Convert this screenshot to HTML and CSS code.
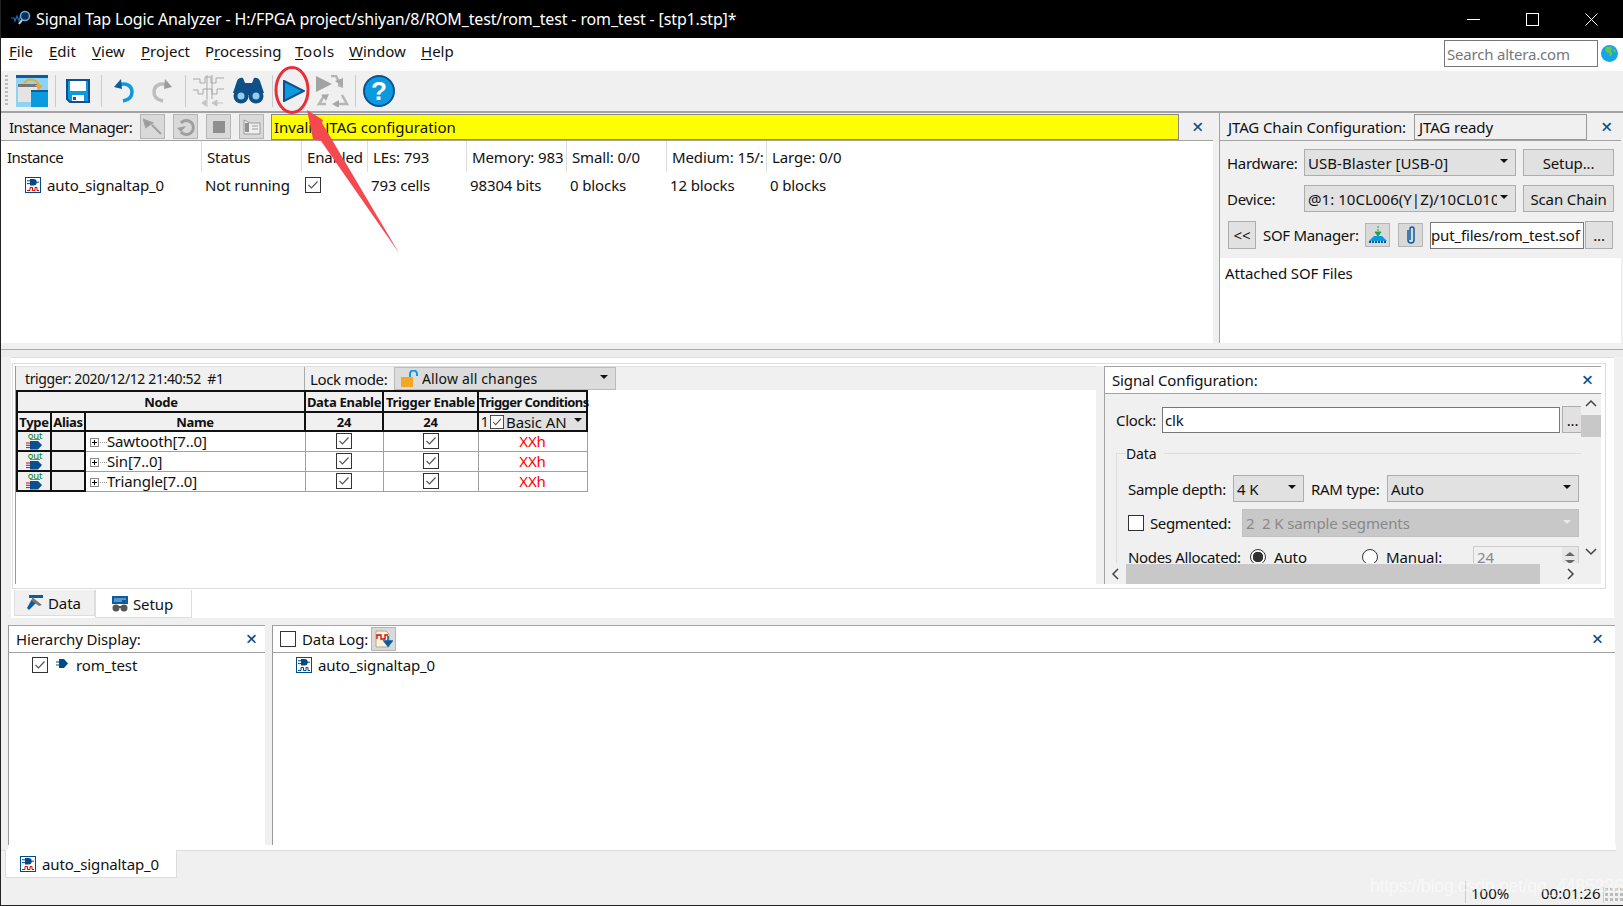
FILE: index.html
```html
<!DOCTYPE html>
<html lang="en">
<head>
<meta charset="utf-8">
<title>Signal Tap Logic Analyzer</title>
<link rel="stylesheet" href="styles.css">
</head>
<body>
<svg class="defs" width="0" height="0">
  <symbol id="inst-red" viewBox="0 0 16 16">
    <rect x=".5" y=".5" width="15" height="15" fill="#fff" stroke="#004a86"/>
    <path d="M5 2h3.500a3.200 3.200 0 0 1 0 6.400H5z" fill="#004a86"/><path d="M2 3.800h3M2 6.600h3M11 5.200h3" stroke="#004a86"/>
    <path d="M2 13.500h3v-3h2.500v3h2.500v-3h2v3h2" fill="none" stroke="#e00000"/>
  </symbol>
  <symbol id="inst-blue" viewBox="0 0 16 16">
    <rect x=".5" y=".5" width="15" height="15" fill="#fff" stroke="#004a86"/>
    <path d="M5 2h3.500a3.200 3.200 0 0 1 0 6.400H5z" fill="#004a86"/><path d="M2 3.800h3M2 6.600h3M11 5.200h3" stroke="#004a86"/>
    <path d="M2 13.500h3v-3h2.500v3h2.500v-3h2v3h2" fill="none" stroke="#004a86"/>
  </symbol>
  <symbol id="out" viewBox="0 0 18 18">
    <text x="10" y="6.500" text-anchor="middle" class="out-text">out</text>
    <path d="M5 7.500h10" stroke="#0a7d2a" stroke-width=".7"/>
    <path d="M5 9h8l4 4-4 4.500H5z" fill="#0a4f94"/>
    <path d="M1 11h4M1 13.300h4M1 15.600h4" stroke="#e00000"/>
  </symbol>
  <symbol id="check" viewBox="0 0 16 16">
    <rect x=".5" y=".5" width="15" height="15" fill="#fff" stroke="#333"/>
    <path d="M3.500 8l3 3 6-6.500" fill="none" stroke="#555" stroke-width="1.200"/>
  </symbol>
  <symbol id="plus" viewBox="0 0 9 9">
    <rect x=".5" y=".5" width="8" height="8" fill="#fff" stroke="#888"/><path d="M2 4.500h5M4.500 2v5" stroke="#000"/>
  </symbol>
</svg>

<div class="app">
  <header class="titlebar">
    <svg class="title-logo" width="22" height="18" viewBox="0 0 22 18"><path d="M0 8h3l1 3 2-5 2 5 1-4" fill="none" stroke="#1c6fb0" stroke-width="1.200"/><circle cx="14" cy="6" r="4.500" fill="#0d2d55" stroke="#5fb4e6" stroke-width="1.500"/><path d="M11 10l-3 4" stroke="#bcd6ea" stroke-width="2"/></svg>
    <span class="title-text">Signal Tap Logic Analyzer - H:/FPGA project/shiyan/8/ROM_test/rom_test - rom_test - [stp1.stp]*</span>
    <div class="win-controls">
      <svg width="13" height="13" viewBox="0 0 13 13"><path d="M0 6.500h13" stroke="#fff"/></svg>
      <svg width="13" height="13" viewBox="0 0 13 13"><rect x=".5" y=".5" width="12" height="12" fill="none" stroke="#fff"/></svg>
      <svg width="13" height="13" viewBox="0 0 13 13"><path d="M.5.500l12 12M12.500.500l-12 12" stroke="#fff"/></svg>
    </div>
  </header>

  <nav class="menubar">
    <span class="menu-item m-file"><u>F</u>ile</span>
    <span class="menu-item m-edit"><u>E</u>dit</span>
    <span class="menu-item m-view"><u>V</u>iew</span>
    <span class="menu-item m-project"><u>P</u>roject</span>
    <span class="menu-item m-processing">P<u>r</u>ocessing</span>
    <span class="menu-item m-tools"><u>T</u>ools</span>
    <span class="menu-item m-window"><u>W</u>indow</span>
    <span class="menu-item m-help"><u>H</u>elp</span>
    <div class="search">Search altera.com</div>
    <svg class="globe" width="17" height="17" viewBox="0 0 17 17"><circle cx="8.500" cy="8.500" r="8.500" fill="#10a5ec"/><path d="M5 2l5-.5 1.500 2.500-2 2 2 2-1.500 3.500-1.500-.5-.5-3-3-1-1-3zM12.500 3l2.500 3-1 2-1.500-2z" fill="#6cc644"/></svg>
  </nav>

  <div class="toolbar">
    <span class="grip"></span>
    <svg class="t-win" width="32" height="32" viewBox="0 0 32 32"><rect width="32" height="32" fill="#8ed3f2"/><rect width="32" height="3" fill="#0d5c9e"/><rect x="2" y="9" width="19" height="18" fill="#e4e4e4"/><rect x="2" y="9" width="19" height="3" fill="#777"/><rect x="15" y="15" width="17" height="17" fill="#0b9ade"/><rect x="15" y="15" width="17" height="2" fill="#0d5c9e"/><path d="M8 8c4-5 13-5 15 3" fill="none" stroke="#f5a623" stroke-width="2"/><path d="M19 10h8l-4 5z" fill="#f5a623"/></svg>
    <span class="t-sep s-1"></span>
    <svg class="t-save" width="24" height="24" viewBox="0 0 24 24"><path d="M1 1h22v22H4l-3-3z" fill="#0b9ade" stroke="#0d4f94" stroke-width="2"/><rect x="4" y="2" width="16" height="10" fill="#fff"/><rect x="6" y="16" width="12" height="6" fill="#fff"/><rect x="7" y="18" width="3" height="3" fill="#1a50c0"/></svg>
    <span class="t-sep s-2"></span>
    <svg class="t-undo" width="20" height="24" viewBox="0 0 20 24"><path d="M5 6c7-3 13 1 13 7 0 5-4 8-9 9" fill="none" stroke="#0b9ade" stroke-width="3.500"/><path d="M0 8l7-8 1 10z" fill="#0d5c9e"/></svg>
    <svg class="t-redo" width="20" height="24" viewBox="0 0 20 24"><path d="M15 6C8 3 2 7 2 13c0 5 4 8 9 9" fill="none" stroke="#bdbdbd" stroke-width="3.500"/><path d="M20 8l-7-8-1 10z" fill="#9c9c9c"/></svg>
    <span class="t-sep s-3"></span>
    <svg class="t-sig" width="32" height="32" viewBox="0 0 32 32"><path d="M0 4h7v4h5V2h6v6h5V3h8M0 15h5v4h5v-5h9v5h5v-5h7M14 0v24M19 0v24" fill="none" stroke="#a8a8a8"/><path d="M9 28l4-3v6zM19 28h11M19 28l5-3v6zM14 24v8" fill="#c4c4c4" stroke="#c4c4c4"/></svg>
    <svg class="t-bino" width="31" height="28" viewBox="0 0 31 28"><path d="M4 4q2-4 6-3l2 5h7l2-5q4-1 6 3l4 12v0H0z" fill="#0d4f86"/><circle cx="8" cy="19" r="7.500" fill="#0d4f86"/><circle cx="23" cy="19" r="7.500" fill="#0d4f86"/><circle cx="8" cy="19" r="3.500" fill="#8fd0f0"/><circle cx="23" cy="19" r="3.500" fill="#8fd0f0"/><rect x="12" y="9" width="7" height="9" fill="#0d4f86"/></svg>
    <span class="t-sep s-4"></span>
    <svg class="t-play" width="22" height="22" viewBox="0 0 22 22"><path d="M1 1l20 10L1 21z" fill="#0b9ade" stroke="#0d4f94" stroke-width="2"/></svg>
    <svg class="t-auto" width="33" height="32" viewBox="0 0 33 32"><path d="M0 1l16 8L0 17z" fill="#a3a3a3"/><path d="M15 1l5 0 5 10-3-1M10 29H3l5-8-2-1M19 29h12l-5-9" fill="none" stroke="#b5b5b5" stroke-width="2.500"/><path d="M16 29l7-4v8zM6 20l7-1-3 7zM27 12l-8-6 8-3z" fill="#a8a8a8"/></svg>
    <span class="t-sep s-5"></span>
    <svg class="t-help" width="32" height="32" viewBox="0 0 32 32"><circle cx="16" cy="16" r="15" fill="#0b9ade" stroke="#0d4f94" stroke-width="2"/><text x="16" y="25" text-anchor="middle" class="help-q">?</text></svg>
  </div>

  <section class="top">
    <div class="instance">
      <div class="inst-head">
        <span class="inst-label">Instance Manager:</span>
        <span class="tool-btn"><svg width="20" height="20" viewBox="0 0 20 20"><path d="M1 3l8 3-6 4zM9 8l9 9" fill="#9a9a9a" stroke="#a0a0a0" stroke-width="2"/></svg></span>
        <span class="tool-btn"><svg width="20" height="20" viewBox="0 0 20 20"><path d="M5 6a7 7 0 1 1 0 9" fill="none" stroke="#9f9f9f" stroke-width="3"/><path d="M1 11l9-2-5 6z" fill="#9f9f9f"/></svg></span>
        <span class="tool-btn"><svg width="20" height="20" viewBox="0 0 20 20"><rect x="4" y="4" width="12" height="12" fill="#8f8f8f"/></svg></span>
        <span class="tool-btn"><svg width="20" height="20" viewBox="0 0 20 20"><path d="M2 3l6 3h10v11H2z" fill="#efefef" stroke="#9a9a9a"/><path d="M3 6h4v9H3z" fill="#8f8f8f"/><path d="M10 9h6M10 12h6" stroke="#999"/></svg></span>
        <div class="status-yellow">Invalid JTAG configuration</div>
        <span class="close inst-close">×</span>
      </div>
      <div class="inst-table">
        <div class="ih c-inst">Instance</div>
        <div class="ih c-status">Status</div>
        <div class="ih c-en">Enabled</div>
        <div class="ih c-les">LEs: 793</div>
        <div class="ih c-mem">Memory: 983</div>
        <div class="ih c-small">Small: 0/0</div>
        <div class="ih c-med">Medium: 15/:</div>
        <div class="ih c-large">Large: 0/0</div>
        <div class="ir c-inst-row"><svg class="icon16" viewBox="0 0 16 16"><use href="#inst-red"/></svg>auto_signaltap_0</div>
        <div class="ir r-status">Not running</div>
        <div class="ir r-en"><svg class="icon16" viewBox="0 0 16 16"><use href="#check"/></svg></div>
        <div class="ir r-les">793 cells</div>
        <div class="ir r-mem">98304 bits</div>
        <div class="ir r-small">0 blocks</div>
        <div class="ir r-med">12 blocks</div>
        <div class="ir r-large">0 blocks</div>
      </div>
    </div>
    <div class="jtag">
      <div class="jtag-head">
        <span class="jtag-title">JTAG Chain Configuration:</span>
        <div class="jtag-status">JTAG ready</div>
        <span class="close jtag-close">×</span>
      </div>
      <div class="jtag-body">
        <div class="jrow">
          <span class="jlabel">Hardware:</span>
          <div class="combo c-hw"><span class="combo-text">USB-Blaster [USB-0]</span><i class="caret"></i></div>
          <div class="btn b-setup">Setup...</div>
        </div>
        <div class="jrow">
          <span class="jlabel">Device:</span>
          <div class="combo c-hw"><span class="combo-text">@1: 10CL006(Y|Z)/10CL010</span><i class="caret"></i></div>
          <div class="btn b-setup">Scan Chain</div>
        </div>
        <div class="jrow jrow-sof">
          <div class="btn b-back">&lt;&lt;</div>
          <span class="sof-label">SOF Manager:</span>
          <span class="tool-btn b-sof"><svg width="20" height="18" viewBox="0 0 20 18"><path d="M10 0v2M10 3v2M7 6h6l-3 4z" stroke="#1aa548" fill="#1aa548"/><path d="M1 15l5-5h8l5 5z" fill="#0b9ade"/><path d="M1 16h18" stroke="#0d4f94" stroke-dasharray="2 1" stroke-width="2"/></svg></span>
          <span class="tool-btn b-clip"><svg width="14" height="20" viewBox="0 0 14 20"><path d="M4 5v10a3 3 0 0 0 6 0V4a2 2 0 0 0-4 0v11" fill="none" stroke="#0d5c9e" stroke-width="1.500"/></svg></span>
          <div class="sof-input"><span>put_files/rom_test.sof</span></div>
          <div class="btn b-dots">...</div>
        </div>
      </div>
      <div class="jtag-files">Attached SOF Files</div>
    </div>
  </section>
  <div class="divider"></div>

  <section class="mid">
    <div class="mid-frame">
      <div class="mid-left">
        <div class="trig-head">
          <span class="trig-info">trigger: 2020/12/12 21:40:52&nbsp; #1</span>
          <span class="lock-label">Lock mode:</span>
          <div class="combo c-lock">
            <svg class="lock-icon" width="18" height="17" viewBox="0 0 18 17"><rect x="0" y="7" width="12" height="10" fill="#f5a623"/><path d="M9 7V4a3.500 3.500 0 0 1 7 0v2" fill="none" stroke="#0b9ade" stroke-width="2"/></svg>
            <span class="combo-text">Allow all changes</span><i class="caret"></i>
          </div>
        </div>
        <table class="nodes">
          <colgroup><col class="w-type"><col class="w-alias"><col class="w-name"><col class="w-de"><col class="w-te"><col class="w-tc"></colgroup>
          <thead>
            <tr class="hr1"><th colspan="3">Node</th><th>Data Enable</th><th>Trigger Enable</th><th class="th-clip">Trigger Conditions</th></tr>
            <tr class="hr2"><th>Type</th><th>Alias</th><th>Name</th><th>24</th><th>24</th>
              <th class="th-tc"><div class="tc-wrap"><span class="tc-num">1</span><svg class="icon14" viewBox="0 0 16 16"><use href="#check"/></svg><div class="tc-combo">Basic AN<i class="caret"></i></div></div></th></tr>
          </thead>
          <tbody>
            <tr><td class="td-type"><svg class="icon-out" viewBox="0 0 18 18"><use href="#out"/></svg></td><td class="td-alias"></td><td class="td-name"><svg class="icon9" viewBox="0 0 9 9"><use href="#plus"/></svg><i class="dots"></i>Sawtooth[7..0]</td><td class="td-c"><svg class="icon15" viewBox="0 0 16 16"><use href="#check"/></svg></td><td class="td-c"><svg class="icon15" viewBox="0 0 16 16"><use href="#check"/></svg></td><td class="td-x">XXh</td></tr>
            <tr><td class="td-type"><svg class="icon-out" viewBox="0 0 18 18"><use href="#out"/></svg></td><td class="td-alias"></td><td class="td-name"><svg class="icon9" viewBox="0 0 9 9"><use href="#plus"/></svg><i class="dots"></i>Sin[7..0]</td><td class="td-c"><svg class="icon15" viewBox="0 0 16 16"><use href="#check"/></svg></td><td class="td-c"><svg class="icon15" viewBox="0 0 16 16"><use href="#check"/></svg></td><td class="td-x">XXh</td></tr>
            <tr><td class="td-type"><svg class="icon-out" viewBox="0 0 18 18"><use href="#out"/></svg></td><td class="td-alias"></td><td class="td-name"><svg class="icon9" viewBox="0 0 9 9"><use href="#plus"/></svg><i class="dots"></i>Triangle[7..0]</td><td class="td-c"><svg class="icon15" viewBox="0 0 16 16"><use href="#check"/></svg></td><td class="td-c"><svg class="icon15" viewBox="0 0 16 16"><use href="#check"/></svg></td><td class="td-x">XXh</td></tr>
          </tbody>
        </table>
      </div>
      <div class="mid-split"></div>
      <div class="signal">
        <div class="signal-title"><span>Signal Configuration:</span><span class="close sig-close">×</span></div>
        <div class="signal-main">
          <div class="signal-content">
            <div class="clock-row">
              <span class="clock-label">Clock:</span>
              <div class="clock-input">clk</div>
              <div class="btn b-clock">...</div>
            </div>
            <div class="group">
              <div class="group-title">Data</div>
              <div class="g-row g-row1">
                <span class="depth-label">Sample depth:</span>
                <div class="combo c-depth"><span class="combo-text">4 K</span><i class="caret"></i></div>
                <span class="ram-label">RAM type:</span>
                <div class="combo c-ram"><span class="combo-text">Auto</span><i class="caret"></i></div>
              </div>
              <div class="g-row g-row2">
                <span class="box"></span>
                <span class="seg-label">Segmented:</span>
                <div class="combo c-seg"><span class="combo-text">2&nbsp; 2 K sample segments</span><i class="caret caret-off"></i></div>
              </div>
              <div class="g-row g-row3">
                <span class="nodes-label">Nodes Allocated:</span>
                <span class="radio radio-on"></span><span class="auto-label">Auto</span>
                <span class="radio"></span><span class="manual-label">Manual:</span>
                <div class="spin"><span>24</span><span class="spin-btns"><i class="sp-up"></i><i class="sp-down"></i></span></div>
              </div>
            </div>
          </div>
          <div class="vscroll">
            <svg class="chev" width="12" height="8" viewBox="0 0 12 8"><path d="M1 7l5-5 5 5" fill="none" stroke="#444" stroke-width="1.500"/></svg>
            <div class="vthumb"></div>
            <svg class="chev chev-down" width="12" height="8" viewBox="0 0 12 8"><path d="M1 1l5 5 5-5" fill="none" stroke="#444" stroke-width="1.500"/></svg>
          </div>
        </div>
        <div class="hscroll">
          <svg class="chev-h" width="8" height="12" viewBox="0 0 8 12"><path d="M7 1L2 6l5 5" fill="none" stroke="#444" stroke-width="1.500"/></svg>
          <div class="hthumb"></div>
          <svg class="chev-h" width="8" height="12" viewBox="0 0 8 12"><path d="M1 1l5 5-5 5" fill="none" stroke="#444" stroke-width="1.500"/></svg>
        </div>
      </div>
    </div>
    <div class="mid-tabs">
      <div class="tab tab-data"><svg width="17" height="17" viewBox="0 0 17 17"><path d="M2 1h14v3H2z" fill="#0d5c9e"/><path d="M5 5l4 4-7 7-2-2z" fill="#0d5c9e"/><path d="M5 3l10 8-3 1-7-5z" fill="#777"/></svg>Data</div>
      <div class="tab tab-setup"><svg width="18" height="16" viewBox="0 0 18 16"><rect x="1" width="16" height="8" fill="#0d5c9e"/><path d="M3 3h12M3 5h8" stroke="#9fd4f2"/><circle cx="5" cy="12" r="3.500" fill="#555"/><circle cx="13" cy="12" r="3.500" fill="#555"/><rect x="7" y="10" width="4" height="2" fill="#555"/></svg>Setup</div>
    </div>
  </section>

  <section class="bottom">
    <div class="hier">
      <div class="pane-head hier-head"><span>Hierarchy Display:</span><span class="close hier-close">×</span></div>
      <div class="hier-row">
        <svg class="icon16" viewBox="0 0 16 16"><use href="#check"/></svg>
        <svg class="net" width="13" height="9" viewBox="0 0 13 9"><path d="M3 0h5l4 4.500-4 4.500H3z" fill="#004a86"/><path d="M0 3h3M0 6h3" stroke="#004a86"/></svg>
        <span>rom_test</span>
      </div>
    </div>
    <div class="bottom-split"></div>
    <div class="dlog">
      <div class="pane-head dlog-head">
        <span class="box"></span>
        <span class="dlog-title">Data Log:</span>
        <span class="tool-btn b-log"><svg width="18" height="18" viewBox="0 0 18 18"><path d="M1 1h10l3 3v13H1z" fill="#fbf2d8" stroke="#b5a98f"/><path d="M2 9V5h4v4h4V5h3" fill="none" stroke="#e00000" stroke-width="1.300"/><path d="M13 6v7M9 11h8l-4 5z" stroke="#0d5c9e" fill="#0d5c9e" stroke-width="1.500"/></svg></span>
        <span class="close dlog-close">×</span>
      </div>
      <div class="dlog-row"><svg class="icon16" viewBox="0 0 16 16"><use href="#inst-blue"/></svg><span>auto_signaltap_0</span></div>
    </div>
  </section>
  <div class="strip"></div>

  <div class="bottom-tabs">
    <div class="inst-tab"><svg class="icon16" viewBox="0 0 16 16"><use href="#inst-red"/></svg><span>auto_signaltap_0</span></div>
  </div>

  <footer class="statusbar">
    <span class="st-cell st-pct">100%</span>
    <span class="st-cell st-time">00:01:26</span>
    <span class="resize-grip"></span>
  </footer>

  <svg class="annot" width="1623" height="906" viewBox="0 0 1623 906">
    <ellipse cx="292" cy="90" rx="16" ry="22.500" fill="none" stroke="#e8303a" stroke-width="3"/>
    <polygon points="307,110 323,120 322,123 399,253 321,141 313,139" fill="#f4494f"/>
  </svg>
  <div class="watermark">https://blog.csdn.net/qq_44852369</div>
</div>
</body>
</html>
```

FILE: styles.css
```css
* { box-sizing: border-box; }
html, body { margin: 0; padding: 0; width: 1623px; height: 906px; overflow: hidden; }
body { font-family: "Noto Sans", "Open Sans", sans-serif; font-size: 15px; letter-spacing: -.12px; color: #111; background: #f0f0f0; }
.defs { position: absolute; }
.out-text { font: 9.500px "Noto Sans", sans-serif; fill: #0a7d2a; }
.help-q { font: bold 26px "Liberation Sans", sans-serif; fill: #fff; }

.app { position: relative; width: 1623px; height: 906px; display: flex; flex-direction: column; border-left: 1px solid #222; border-bottom: 1px solid #222; background: #f0f0f0; }

.titlebar { height: 38px; flex: none; background: #000; color: #fff; display: flex; align-items: center; padding-left: 10px; font-size: 16px; letter-spacing: -.14px; }
.title-logo { margin-right: 3px; }
.title-text { white-space: nowrap; }
.win-controls { margin-left: auto; display: flex; gap: 46px; padding-right: 25px; }

.menubar { height: 33px; flex: none; background: #fff; border-bottom: 2px solid #fbfbfb; display: flex; align-items: center; padding: 0 0 6px 8px; letter-spacing: 0; }
.menu-item { white-space: nowrap; }
.menu-item u { text-decoration-thickness: 1px; text-underline-offset: 2px; }
.m-file { width: 40px; } .m-edit { width: 43px; } .m-view { width: 49px; } .m-project { width: 64px; }
.m-processing { width: 90px; } .m-tools { width: 54px; letter-spacing: .7px; } .m-window { width: 72px; }
.search { margin-left: auto; align-self: flex-start; width: 154px; height: 27px; margin-top: 2px; border: 1px solid #777; background: #fff; color: #777; padding: 3px 0 0 2px; white-space: nowrap; letter-spacing: -.2px; }
.globe { margin: 7px 5px 0 3px; align-self: flex-start; }

.toolbar { height: 42px; flex: none; display: flex; align-items: center; background: #f0f0f0; border-bottom: 2px solid #a3a3a3; padding-left: 4px; }
.grip { width: 3px; height: 32px; background: repeating-linear-gradient(#bbb 0 2px, transparent 2px 4px); margin-right: 8px; }
.t-sep { width: 1px; height: 32px; background: #ccc; }
.s-1 { margin: 0 10px 0 7px; } .s-2 { margin: 0 12px 0 11px; } .s-3 { margin: 0 7px 0 13px; } .s-4 { margin: 0 10px 0 8px; } .s-5 { margin: 0 7px 0 6px; }
.t-redo { margin-left: 18px; }
.t-bino { margin-left: 8px; }
.t-auto { margin-left: 11px; }

.top { height: 230px; flex: none; display: flex; }
.instance { width: 1212px; background: #fff; display: flex; flex-direction: column; }
.inst-head { height: 28px; flex: none; background: #f0f0f0; border-bottom: 1px solid #a3a3a3; display: flex; align-items: center; padding-left: 8px; }
.inst-label { width: 131px; white-space: nowrap; letter-spacing: -.5px; }
.tool-btn { width: 25px; height: 25px; background: #d9d9d9; border: 1px solid #b5b5b5; margin-right: 8px; display: flex; align-items: center; justify-content: center; flex: none; }
.status-yellow { width: 908px; height: 26px; margin-left: -1px; background: #ff0; border: 1px solid #888; padding-left: 2px; line-height: 25px; white-space: nowrap; letter-spacing: 0; }
.close { color: #0d4f86; font-size: 20px; line-height: 20px; font-weight: 500; }
.inst-close { margin-left: 13px; }
.inst-table { display: grid; grid-template-columns: 201px 100px 66px 99px 100px 100px 100px 1fr; grid-template-rows: 31px 26px; }
.ih { border-right: 1px solid #ddd; padding: 6px 0 0 5px; white-space: nowrap; overflow: hidden; }
.c-inst { padding-left: 6px; letter-spacing: -.5px; }
.c-large { border-right: 0; }
.ir { white-space: nowrap; display: flex; align-items: center; padding-left: 3px; }
.c-inst-row { padding-left: 24px; gap: 6px; }
.icon16 { width: 16px; height: 16px; flex: none; }

.jtag { width: 402px; margin-left: 6px; border-left: 1px solid #a3a3a3; display: flex; flex-direction: column; background: #fff; }
.jtag-head { height: 28px; flex: none; background: #f0f0f0; border-bottom: 1px solid #a3a3a3; display: flex; align-items: center; padding-left: 8px; }
.jtag-title { width: 186px; white-space: nowrap; }
.jtag-status { width: 173px; height: 26px; border: 1px solid #999; padding-left: 4px; line-height: 24px; }
.jtag-close { margin-left: 14px; }
.jtag-body { height: 117px; flex: none; background: #f0f0f0; padding: 8px 0 0 7px; display: flex; flex-direction: column; gap: 9px; }
.jrow { display: flex; align-items: center; height: 27px; }
.jlabel { width: 77px; letter-spacing: -.3px; }
.combo { display: flex; align-items: center; background: #e1e1e1; border: 1px solid #adadad; padding-left: 3px; white-space: nowrap; overflow: hidden; }
.combo-text { overflow: hidden; flex: 1; }
.caret { flex: none; width: 0; height: 0; border-left: 4px solid transparent; border-right: 4px solid transparent; border-top: 4px solid #111; margin: 0 7px 3px 6px; display: block; }
.caret-off { border-top-color: #e8e8e8; }
.c-hw { width: 212px; height: 27px; letter-spacing: .05px; }
.c-hw .combo-text { max-width: 190px; }
.c-hw .caret { margin-left: 3px; }
.btn { background: #e1e1e1; border: 1px solid #adadad; display: flex; align-items: center; justify-content: center; white-space: nowrap; }
.b-setup { width: 91px; height: 27px; margin-left: 7px; }
.jrow-sof { height: 28px; }
.b-back { width: 28px; height: 28px; margin-left: 1px; }
.sof-label { width: 102px; margin-left: 7px; white-space: nowrap; letter-spacing: -.3px; }
.b-sof { margin-right: 8px; height: 24px; }
.b-clip { margin-right: 7px; height: 24px; }
.sof-input { width: 154px; height: 27px; background: #fff; border: 1px solid #777; overflow: hidden; white-space: nowrap; line-height: 25px; letter-spacing: -.16px; }
.b-dots { width: 28px; height: 28px; margin-left: 1px; }
.jtag-files { padding: 5px 0 0 5px; flex: 1; }

.divider { height: 8px; flex: none; margin-top: 6px; border-top: 1px solid #aaa; background: #ececec; }

.mid { height: 261px; flex: none; margin: 0 9px 0 10px; background: #fff; border-top: 1px solid #ddd; display: flex; flex-direction: column; }
.mid-frame { height: 226px; flex: none; margin: 5px 8px 0 1px; border: 1px solid #ddd; display: flex; padding: 2px 5px 4px 2px; }
.mid-left { width: 1081px; flex: none; border-left: 1px solid #999; }
.trig-head { height: 24px; background: #f0f0f0; display: flex; align-items: center; border-top: 1px solid #ddd; font-size: 14px; }
.trig-info { width: 289px; padding-left: 9px; white-space: nowrap; border-right: 1px solid #aaa; height: 100%; line-height: 23px; letter-spacing: -.38px; }
.lock-label { width: 89px; padding-left: 5px; font-size: 15px; white-space: nowrap; letter-spacing: -.35px; }
.c-lock { width: 222px; height: 23px; background: #dcdcdc; border: 1px solid #bbb; letter-spacing: .15px; }
.lock-icon { margin: 0 3px 0 3px; flex: none; }
.nodes { border-collapse: collapse; table-layout: fixed; width: 570px; font-size: 14px; }
.w-type { width: 34px; } .w-alias { width: 34px; } .w-name { width: 220px; } .w-de { width: 78px; } .w-te { width: 95px; } .w-tc { width: 109px; }
.nodes th { background: #f0f0f0; border: 2px solid #111; font-size: 13px; padding: 0; font-weight: 700; white-space: nowrap; letter-spacing: -.3px; line-height: 16px; }
.th-clip { text-align: left; letter-spacing: -.55px !important; }
.hr1 th { height: 21px; } .hr2 th { height: 19px; }
.nodes td { height: 20px; padding: 0; border: 1px solid #a0a0a0; line-height: 18px; }
.td-type { background: #f0f0f0; border: 2px solid #111 !important; text-align: center; }
.td-alias { background: #f0f0f0; border: 2px solid #111 !important; border-left-width: 1px; }
.td-name { white-space: nowrap; font-size: 15px; letter-spacing: -.14px; }
.td-name .icon9 { width: 9px; height: 9px; margin: 0 1px 0 4px; }
.dots { display: inline-block; width: 7px; border-top: 1px dotted #999; vertical-align: 4px; }
.td-c { text-align: center; line-height: 0 !important; }
.icon15 { width: 16px; height: 16px; vertical-align: middle; }
.td-x { color: #f00; text-align: center; font-size: 15px; }
.icon-out { width: 18px; height: 18px; vertical-align: top; }
.tc-wrap { display: flex; align-items: center; height: 17px; font-weight: 400; }
.tc-num { width: 11px; font-size: 14px; }
.icon14 { width: 14px; height: 14px; }
.tc-combo { flex: 1; background: #e1e1e1; font-size: 15px; display: flex; align-items: center; padding-left: 2px; height: 17px; letter-spacing: -.1px; white-space: nowrap; justify-content: space-between; }
.tc-combo .caret { margin-right: 4px; }

.mid-split { width: 8px; flex: none; background: #f0f0f0; }
.signal { width: 497px; flex: none; display: flex; flex-direction: column; border-left: 1px solid #a3a3a3; }
.signal-title { height: 28px; flex: none; background: #fff; border-top: 1px solid #a3a3a3; border-bottom: 1px solid #a3a3a3; display: flex; align-items: center; justify-content: space-between; padding: 0 8px 0 7px; }
.signal-main { flex: 1; display: flex; min-height: 0; background: #f0f0f0; }
.signal-content { width: 477px; overflow: hidden; padding: 12px 0 0 11px; }
.clock-row { display: flex; align-items: center; height: 27px; }
.clock-label { width: 46px; flex: none; letter-spacing: -.3px; }
.clock-input { width: 398px; height: 26px; background: #fff; border: 1px solid #777; padding-left: 2px; line-height: 24px; flex: none; }
.b-clock { width: 21px; height: 27px; margin-left: 2px; flex: none; }
.group { margin-top: 20px; border-top: 1px solid #ddd; border-left: 1px solid #ddd; padding-left: 11px; height: 140px; }
.group-title { background: #f0f0f0; width: 38px; margin: -10px 0 0 -2px; line-height: 20px; font-size: 14px; }
.g-row { display: flex; align-items: center; white-space: nowrap; }
.g-row1 { margin-top: 11px; height: 27px; }
.depth-label { letter-spacing: -.3px; width: 102px; }
.c-depth { width: 71px; height: 27px; margin-left: 3px; }
.ram-label { margin-left: 7px; width: 76px; letter-spacing: -.3px; }
.c-ram { width: 192px; height: 27px; }
.g-row2 { margin-top: 7px; height: 28px; }
.box { width: 16px; height: 16px; background: #fff; border: 1px solid #333; flex: none; }
.seg-label { width: 92px; margin-left: 6px; letter-spacing: -.4px; }
.c-seg { width: 337px; height: 28px; background: #c8c8c8; border-color: #c0c0c0; color: #888; }
.g-row3 { margin-top: 9px; height: 22px; }
.nodes-label { width: 122px; letter-spacing: -.35px; }
.radio { width: 16px; height: 16px; border-radius: 50%; border: 1px solid #333; background: #fff; flex: none; }
.radio-on { background: radial-gradient(circle, #333 0 5px, #fff 5.500px); }
.auto-label { width: 88px; margin-left: 8px; }
.manual-label { width: 87px; margin-left: 8px; }
.spin { width: 106px; height: 28px; border: 1px solid #ccc; color: #888; padding-left: 3px; display: flex; justify-content: space-between; margin-top: 6px; flex: none; }
.spin-btns { width: 16px; display: flex; flex-direction: column; gap: 4px; padding: 5px 3px 0; background: #e6e6e6; }
.sp-up { border-left: 5px solid transparent; border-right: 5px solid transparent; border-bottom: 4px solid #666; width: 0; }
.sp-down { border-left: 5px solid transparent; border-right: 5px solid transparent; border-top: 4px solid #666; width: 0; }
.vscroll { width: 20px; flex: none; background: #f0f0f0; display: flex; flex-direction: column; align-items: center; padding-top: 5px; }
.vthumb { width: 100%; height: 22px; margin-top: 8px; background: #c8c8c8; }
.chev-down { margin-top: auto; margin-bottom: 7px; }
.hscroll { height: 21px; flex: none; background: #f0f0f0; display: flex; align-items: center; padding: 0 26px 0 6px; }
.hthumb { width: 414px; height: 20px; background: #c8c8c8; margin: 0 auto 0 7px; }

.mid-tabs { flex: 1; display: flex; padding-left: 3px; margin-top: 1px; }
.tab { display: flex; align-items: center; gap: 4px; border: 1px solid #ddd; white-space: nowrap; }
.tab-data { width: 81px; height: 26px; background: #f0f0f0; border-top: 0; padding-left: 12px; }
.tab-setup { width: 97px; height: 28px; background: #fff; border-top: 0; padding-left: 15px; }

.bottom { height: 220px; flex: none; margin: 7px 8px 0 7px; display: flex; }
.hier { width: 257px; flex: none; background: #fff; border-left: 1px solid #999; border-top: 1px solid #a3a3a3; }
.bottom-split { width: 7px; flex: none; }
.dlog { flex: 1; background: #fff; border-left: 1px solid #999; border-top: 1px solid #a3a3a3; }
.pane-head { height: 27px; border-bottom: 1px solid #a3a3a3; display: flex; align-items: center; }
.hier-head { padding: 0 8px 0 7px; justify-content: space-between; }
.dlog-head { padding-left: 7px; }
.dlog-title { width: 69px; margin-left: 6px; white-space: nowrap; }
.b-log { height: 24px; margin: 0; }
.dlog-close { margin-left: auto; margin-right: 12px; }
.hier-row { display: flex; align-items: center; padding: 2px 0 0 23px; height: 22px; }
.net { margin: 0 7px 4px 8px; }
.dlog-row { display: flex; align-items: center; padding: 2px 0 0 23px; height: 22px; gap: 6px; }
.strip { height: 5px; flex: none; background: #fff; margin: 0 7px; }

.bottom-tabs { height: 28px; flex: none; margin-right: 7px; border-top: 1px solid #ddd; padding-left: 4px; }
.inst-tab { width: 172px; height: 28px; margin-top: -1px; background: #fff; border: 1px solid #ddd; border-top: 0; display: flex; align-items: center; gap: 6px; padding-left: 14px; white-space: nowrap; }

.statusbar { flex: 1; display: flex; align-items: flex-end; justify-content: flex-end; padding-bottom: 2px; }
.st-cell { border-left: 1px solid #ccc; height: 22px; line-height: 24px; padding-left: 5px; font-size: 15px; letter-spacing: 0; }
.st-pct { width: 76px; }
.st-time { width: 62px; border-left: 0; padding-left: 0; }
.resize-grip { width: 20px; height: 16px; border-left: 1px solid #ccc; background: radial-gradient(circle, #bbb 1.500px, transparent 1.600px) 0 0 / 5px 5px; }

.annot { position: absolute; left: -1px; top: 0; pointer-events: none; }
.watermark { position: absolute; left: 1369px; top: 876px; font: 18px "Liberation Sans", sans-serif; color: rgba(255, 255, 255, .55); white-space: nowrap; letter-spacing: -.4px; }
```
